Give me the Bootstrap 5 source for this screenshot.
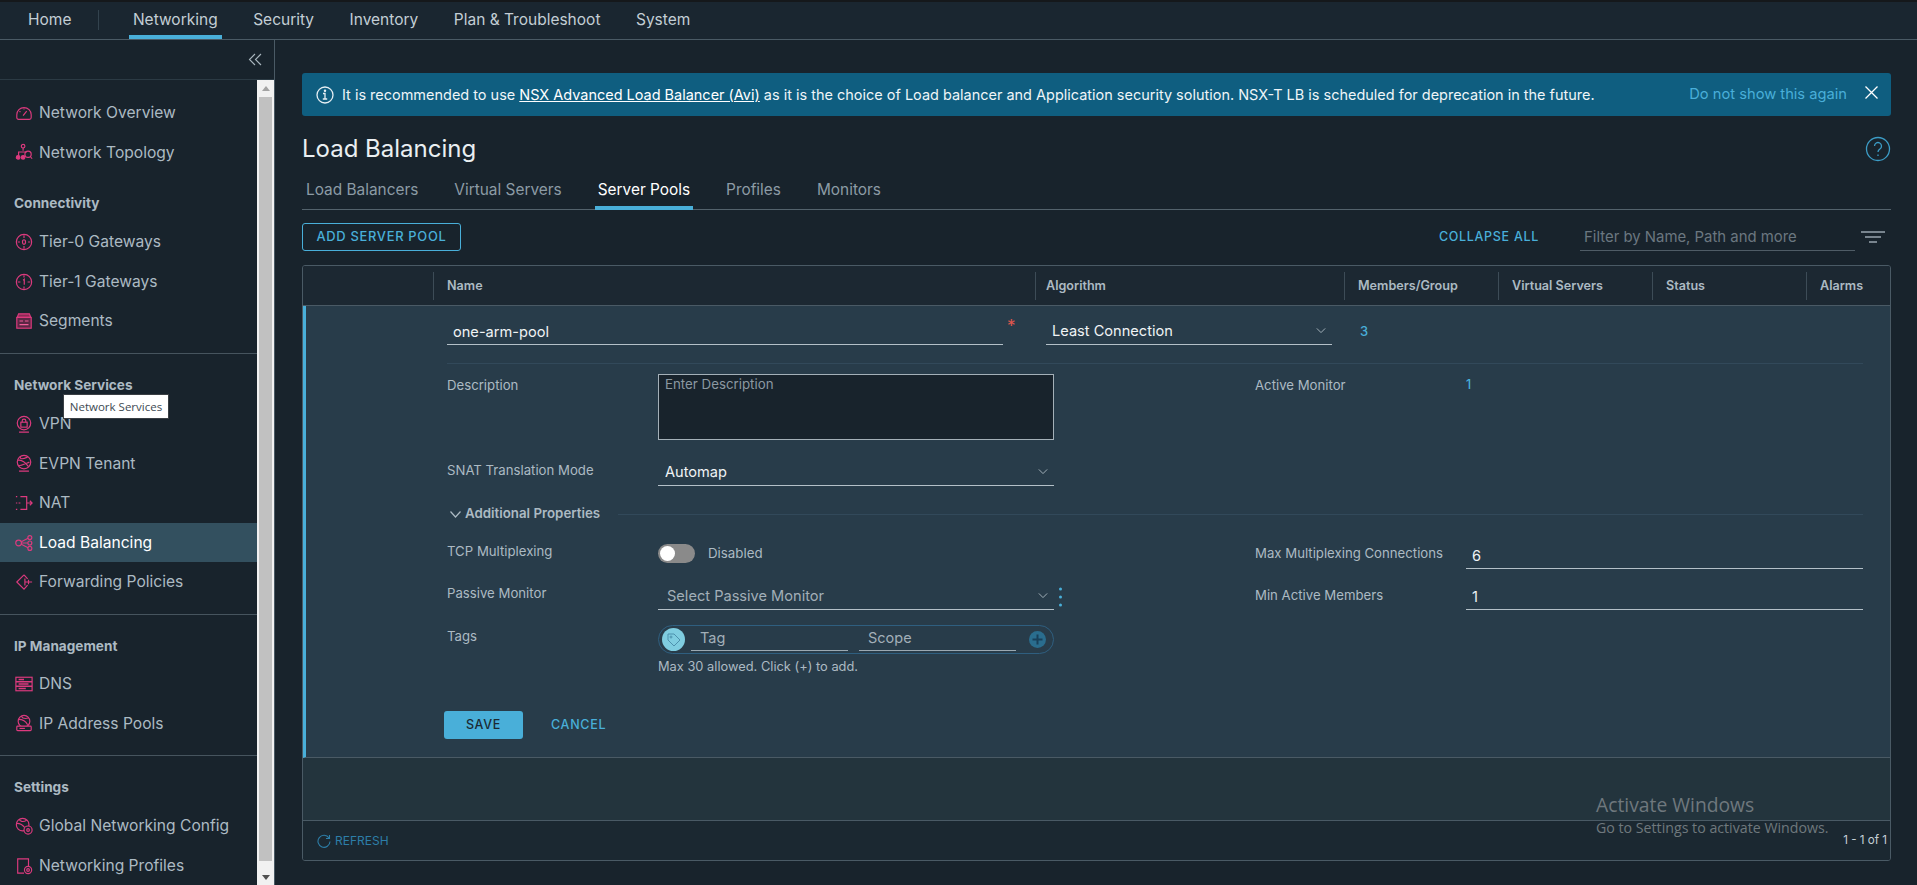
<!DOCTYPE html>
<html lang="en"><head><meta charset="utf-8"><title>Load Balancing</title>
<link href="https://cdn.jsdelivr.net/npm/bootstrap@5.3.0/dist/css/bootstrap.min.css" rel="stylesheet">
<style>
html,body{height:885px;overflow:hidden}
body{background:#18232c;color:#c5d0d6;font-family:Inter,"Noto Sans",sans-serif;font-size:14px}
.topbar{height:40px;background:#1a2630;border-top:2px solid #15181b;border-bottom:1px solid #4a5a65;padding-left:24px}
.toplink{color:#c3ced5;font-size:15.5px;padding:0 4px;height:37px;line-height:36px;margin-right:27.5px;text-decoration:none;border-bottom:4px solid transparent}
.toplink.onn{border-bottom-color:#49afd9}
.topsep{width:1px;height:20px;background:#33434e;margin:0 30px 0 -5px}
.shell{height:845px}
.sidebar{width:275px;background:#18232c;border-right:1px solid #4a5a65}
.collapserow{height:40px;border-bottom:1px solid #2b3a44;padding-right:12px}
.sidescroll{height:805px}
.sidenav{width:257px;height:805px;overflow:hidden;padding-top:13px}
.sgroup{border-top:1px solid #46545e;padding-bottom:12px}
.sgroup.firstg{border-top:0;padding-bottom:0}
.sgroup.nolineg{border-top:0}
.shead{font-weight:700;font-size:13.6px;color:#acbac3;line-height:18px;padding:22px 0 10px 14px}
.sgroup.tightg .shead{padding-bottom:9px}
.sitem{height:39.6px;display:flex;align-items:center;color:#acbac3;font-size:15.6px;padding-left:15px;text-decoration:none}
.sitem svg{width:18px;height:18px;margin-right:6px;flex:none;stroke:#dc3a7e;fill:none;stroke-width:1.3}
.sitem.picked{background:#33505f;color:#fff}
.fakebar{width:17px;background:#f1f1f1;padding:0 2px;position:relative}
.fakethumb{position:absolute;left:2px;right:2px;top:17px;bottom:24px;background:#c1c1c1}
.arrup,.arrdn{position:absolute;left:5px;width:0;height:0;border-left:4px solid transparent;border-right:4px solid transparent}
.arrup{top:6px;border-bottom:5px solid #a3a3a3}
.arrdn{bottom:5px;border-top:5px solid #505050}
.tipbox{position:absolute;left:63px;top:394px;width:106px;height:25px;background:#fff;border:1px solid #3a3f44;color:#3e4a52;font:11.5px/23px "Open Sans",sans-serif;text-align:center;z-index:5}
.mainpane{padding:33px 26px 0 27px;background:#18232c;min-width:0}
.banner{height:43px;background:#0f5e80;border-radius:3px;padding:0 12px 0 14px;color:#eef5f8;font-size:14.48px}
.banner a{color:#fff}
.banner .dontshow{color:#49afd9;text-decoration:none;font-size:14.7px;margin-right:17px}
.pagetitle{font-size:24px;font-weight:400;color:#eaeff2;margin:0;line-height:36px}
.titlerow{margin-top:16px;height:34px}
.tabsrow{margin-top:5px;height:39px;border-bottom:1px solid #53626c;padding-left:1px}
.tablink{color:#8c9ba5;font-size:15.4px;padding:0 3px;margin-right:30px;height:39px;line-height:38px;text-decoration:none;border-bottom:4px solid transparent}
.tablink.onn{color:#fff;border-bottom-color:#49afd9}
.toolrow{margin-top:13px;height:28px}
.outbtn{height:28px;width:159px;padding:0;border:1px solid #49afd9;border-radius:3px;background:transparent;color:#49afd9;font-size:12.9px;letter-spacing:.7px;font-weight:500}
.linkbtn{color:#49afd9;font-size:12.5px;letter-spacing:.7px;font-weight:500;text-decoration:none}
.filterbox{width:275px;height:28px;background:transparent;border:0;border-bottom:1px solid #4f5c66;border-radius:0;color:#fff;font-size:14.9px;padding:2px 4px;margin:0 6px 0 41px}
.filterbox::placeholder{color:#6b7780}
.filterbox:focus{background:transparent;box-shadow:none;color:#fff}
.filtericon{margin-right:6px}
.poolgrid{margin-top:14px;height:596px;border:1px solid #4a5a65;border-radius:3px;overflow:hidden}
.gridhead{height:40px;background:#1c2832;border-bottom:1px solid #4a5a65;font-weight:600;font-size:12.6px;color:#acbac3}
.gh{height:28px;border-left:1px solid #3d4c57;padding-left:13px;line-height:28px;flex:none}
.expanded{height:452px;background:#283c4a;border-left:3px solid #49afd9;border-bottom:1px solid #4a5a65;padding:0 27px 0 141px}
.firstline{height:58px;border-bottom:1px solid #32495a;padding-top:11px}
.lineinput{height:28px;background:transparent;border:0;border-bottom:1px solid #b4c0c8;border-radius:0;color:#f0f3f5;font-size:14.6px;padding:2px 6px 0}
.lineinput:focus{background-color:transparent;box-shadow:none;color:#f0f3f5;border-color:#b4c0c8}
.lineselect{background-color:transparent;background-image:url("data:image/svg+xml,%3Csvg xmlns='http://www.w3.org/2000/svg' viewBox='0 0 12 8'%3E%3Cpath d='M1 1.5l5 5 5-5' fill='none' stroke='%23a2afb8' stroke-width='1.2'/%3E%3C/svg%3E");background-size:10px 7px;background-position:right 6px center;background-repeat:no-repeat}
.reqmark{width:43px;padding-left:4px;color:#e0574d;font-size:17px;line-height:18px}
.formrow{display:grid;grid-template-columns:211px 396px 201px 211px 397px}
.flabel{color:#acbac3;font-size:13.2px;line-height:20px}
.bluelink{color:#49afd9;font-weight:500;font-size:12.4px;line-height:20px}
.descbox{height:66px;background:#18232c;border:1px solid #a4b0b8;border-radius:0;color:#fff;font-size:13.3px;padding:0 6px;resize:none}
.descbox::placeholder{color:#8b98a1}
.descbox:focus{background:#18232c;box-shadow:none;color:#fff;border-color:#a4b0b8}
.addprops{margin-top:18px;height:20px;font-weight:600;font-size:13.3px;color:#acbac3;padding-left:3px}
.addprops i{flex:1;height:1px;background:#32495a;margin-left:18px}
.toggletrack{width:37px;height:19px;border-radius:10px;background:#8a8a8a;position:relative;margin-top:3px}
.toggleknob{position:absolute;left:2px;top:2px;width:15px;height:15px;border-radius:50%;background:#fff}
.togtxt{font-size:13.3px;color:#acbac3;margin-left:13px;margin-top:2px;line-height:20px}
.dotsbox{width:3px;height:20px;position:absolute;right:-8px;top:5px}
.tagpill{height:29px;border:1px solid #2f5f80;border-radius:15px;padding:0 3px;position:relative}
.tagcirc{width:23px;height:23px;border-radius:50%;background:#7fcde0;flex:none;margin-right:6px}
.taginput{width:157px;height:23px;background:transparent;border:0;border-bottom:1px solid #9aa8b2;border-radius:0;padding:0 9px 4px;font-size:14.5px;color:#fff;margin-right:11px}
.taginput::placeholder{color:#a2afb8}
.taginput:focus{background:transparent;box-shadow:none;color:#fff}
.plus{width:17px;height:17px;margin-left:13px;flex:none}
.helptxt{font-size:12.85px;color:#acbac3;line-height:18px;margin-top:4px}
.savebtn{width:79px;height:28px;padding:0;background:#49afd9;border:0;border-radius:3px;color:#1b2a32;font-size:12.5px;letter-spacing:.7px;font-weight:500;margin:0 28px 0 -3px}
.gridempty{height:63px;background:#23343d;border-bottom:1px solid #4a5a65}
.gridfoot{height:39px;background:#1b2831;padding:0 3px 0 14px;font-size:12px}
.refreshlink{color:#2d7ea8;font-size:12px;text-decoration:none}
.pagecount{color:#c5d0d6;font-size:11.6px;margin-left:auto}
.winmark{position:absolute;left:1596px;top:791px;color:#6f787d;font-family:"Open Sans",sans-serif;z-index:6;pointer-events:none}
.winmark b{display:block;font-weight:400;font-size:19.3px;line-height:27px}
.winmark span{font-size:14.2px;line-height:20px;display:block}
</style></head>
<body class="position-relative">
<nav class="topbar d-flex align-items-start">
  <a class="toplink" href="#">Home</a><span class="topsep mt-2"></span>
  <a class="toplink onn" href="#">Networking</a>
  <a class="toplink" href="#">Security</a>
  <a class="toplink" href="#">Inventory</a>
  <a class="toplink" href="#">Plan &amp; Troubleshoot</a>
  <a class="toplink" href="#">System</a>
</nav>
<div class="shell d-flex">
  <aside class="sidebar flex-shrink-0">
    <div class="collapserow d-flex align-items-center justify-content-end">
      <svg width="14" height="13" viewBox="0 0 14 13" fill="none" stroke="#a9b6be" stroke-width="1.1"><path d="M7 1L1.500 6.500 7 12M13 1L7.500 6.500 13 12"/></svg>
    </div>
    <div class="sidescroll d-flex">
      <div class="sidenav">
        <div class="sgroup firstg">
          <a class="sitem" href="#"><svg viewBox="0 0 20 20"><path d="M2 12a8 8 0 0 1 16 0v3a2 2 0 0 1-2 2H4a2 2 0 0 1-2-2z"/><path d="M9 13l4-5M5 8l1 1M10 5v1"/></svg>Network Overview</a>
          <a class="sitem" href="#"><svg viewBox="0 0 20 20"><circle cx="9" cy="3.5" r="2"/><path d="M9 5.500v3M4 14v-4h9"/><circle cx="3.500" cy="16" r="2" fill="#dc3a7e"/><circle cx="9" cy="16" r="2" fill="#dc3a7e"/><circle cx="14.500" cy="12.500" r="3.500"/><path d="M17 15l2 2.500"/></svg>Network Topology</a>
        </div>
        <div class="sgroup nolineg">
          <div class="shead">Connectivity</div>
          <a class="sitem" href="#"><svg viewBox="0 0 20 20"><circle cx="10" cy="10" r="8.500"/><ellipse cx="10" cy="10" rx="1.700" ry="2.500"/><path d="M10 2.500v3M10 14.500v3M3 10h2.500M14.500 10H17"/></svg>Tier-0 Gateways</a>
          <a class="sitem" href="#"><svg viewBox="0 0 20 20"><circle cx="10" cy="10" r="8.500"/><path d="M9 8l1.300-1v6M10 2.500v2.500M10 15v2.500M3 10h3M14 10h3"/></svg>Tier-1 Gateways</a>
          <a class="sitem" href="#"><svg viewBox="0 0 20 20"><path d="M2.500 6L4 2h12l1.500 4z" fill="#8b2a55"/><rect x="2" y="6" width="16" height="12" fill="#5c2745"/><path d="M5 10h4M11 10h4M5 14h10" stroke="#ef5f9a"/></svg>Segments</a>
        </div>
        <div class="sgroup">
          <div class="shead">Network Services</div>
          <a class="sitem" href="#"><svg viewBox="0 0 20 20"><circle cx="10" cy="9" r="7.500"/><rect x="6.500" y="8" width="7" height="5.500"/><path d="M8 8V6.500a2 2 0 0 1 4 0V8M4.500 19h11"/></svg>VPN</a>
          <a class="sitem" href="#"><svg viewBox="0 0 20 20"><circle cx="10" cy="9" r="7.500"/><path d="M3 7c4-1 9 3 12 7M6 2.500C5 6 8 6 14 3.500M4 13c3 0 7-2 12-4M4.500 19h11"/></svg>EVPN Tenant</a>
          <a class="sitem" href="#"><svg viewBox="0 0 20 20"><path d="M6 3h7v14H6M13 10h6M16.500 7.500L19 10l-2.500 2.500M4 10h2M1 3h1.500M1 10h1.500M1 17h1.500"/></svg>NAT</a>
          <a class="sitem picked" href="#"><svg viewBox="0 0 20 20"><circle cx="4" cy="10" r="3.200"/><circle cx="16.500" cy="4" r="2.200"/><circle cx="16.500" cy="10" r="2.200"/><circle cx="16.500" cy="16" r="2.200"/><path d="M7 8.500l7.500-3.700M7.200 10h7M7 11.500l7.500 3.700"/></svg>Load Balancing</a>
          <a class="sitem" href="#"><svg viewBox="0 0 20 20"><path d="M10 2L2 10l8 8 4-4.500M14 6.500L10 2"/><path d="M11 6v8M11 10h8M15 7.500v5"/></svg>Forwarding Policies</a>
        </div>
        <div class="sgroup tightg">
          <div class="shead">IP Management</div>
          <a class="sitem" href="#"><svg viewBox="0 0 20 20"><rect x="1" y="2.500" width="18" height="15"/><path d="M1 7.500h18M1 12.500h18M4 5h6M4 10h11M4 15h8" stroke-width="1.500"/></svg>DNS</a>
          <a class="sitem" href="#"><svg viewBox="0 0 20 20"><circle cx="10" cy="8" r="6.500"/><path d="M4 6c4 0 8 2 10 6M7 2.500c1 2 4 3 8 2"/><rect x="2" y="13.500" width="16" height="5" rx="1" fill="#18232c"/><path d="M5 16h6"/></svg>IP Address Pools</a>
        </div>
        <div class="sgroup">
          <div class="shead">Settings</div>
          <a class="sitem" href="#"><svg viewBox="0 0 20 20"><circle cx="8.500" cy="8.500" r="7"/><path d="M2 7c3 0 7 2 9 5M5 2.500C5 5 9 6 13 3.500"/><circle cx="14.500" cy="14.500" r="4.500" fill="#18232c"/><circle cx="14.500" cy="14.500" r="1.500"/></svg>Global Networking Config</a>
          <a class="sitem" href="#"><svg viewBox="0 0 20 20"><path d="M10 18H3V2h12v8"/><circle cx="14.500" cy="14.500" r="4"/><circle cx="14.500" cy="14.500" r="1.500"/></svg>Networking Profiles</a>
        </div>
      </div>
      <div class="fakebar"><span class="arrup"></span><div class="fakethumb"></div><span class="arrdn"></span></div>
    </div>
  </aside>
  <main class="mainpane flex-grow-1">
    <div class="banner d-flex align-items-center">
      <svg class="flex-shrink-0 me-2" width="18" height="18" viewBox="0 0 18 18" fill="none" stroke="#e6eff3" stroke-width="1.300"><circle cx="9" cy="9" r="8"/><path d="M7 7.500h2v5.500M6.800 13h4.400"/><circle cx="9" cy="4.800" r=".6" fill="#e6eff3"/></svg>
      <span>It is recommended to use <a href="#">NSX Advanced Load Balancer (Avi)</a> as it is the choice of Load balancer and Application security solution. NSX-T LB is scheduled for deprecation in the future.</span>
      <a class="dontshow ms-auto" href="#">Do not show this again</a>
      <svg width="15" height="15" viewBox="0 0 15 15" stroke="#fff" stroke-width="1.300" class="flex-shrink-0 mb-1"><path d="M1.500 1.500l12 12M13.500 1.500l-12 12"/></svg>
    </div>
    <div class="titlerow d-flex align-items-center justify-content-between">
      <h1 class="pagetitle">Load Balancing</h1>
      <svg width="26" height="26" viewBox="0 0 26 26" fill="none" stroke="#3c9dc7" stroke-width="1.300"><circle cx="13" cy="13" r="11.500"/><path d="M9.500 10a3.500 3.500 0 1 1 5.400 3c-1.200.8-1.900 1.500-1.900 3"/><path d="M13 18.500v1.500"/></svg>
    </div>
    <div class="tabsrow d-flex">
      <a class="tablink" href="#">Load Balancers</a>
      <a class="tablink" href="#">Virtual Servers</a>
      <a class="tablink onn" href="#">Server Pools</a>
      <a class="tablink" href="#">Profiles</a>
      <a class="tablink" href="#">Monitors</a>
    </div>
    <div class="toolrow d-flex align-items-center">
      <button class="btn outbtn" type="button">ADD SERVER POOL</button>
      <a class="linkbtn ms-auto" href="#">COLLAPSE ALL</a>
      <input class="form-control filterbox" placeholder="Filter by Name, Path and more">
      <svg class="filtericon" width="24" height="12" viewBox="0 0 24 12" stroke="#98a5ae" stroke-width="1.300"><path d="M0 1h24M4 6h16M8 11h8"/></svg>
    </div>
    <section class="poolgrid">
      <div class="gridhead d-flex align-items-center">
        <div class="flex-shrink-0" style="width:130px"></div>
        <div class="gh" style="width:602px">Name</div>
        <div class="gh" style="width:309px;padding-left:10px">Algorithm</div>
        <div class="gh" style="width:154px">Members/Group</div>
        <div class="gh" style="width:154px">Virtual Servers</div>
        <div class="gh" style="width:154px">Status</div>
        <div class="gh">Alarms</div>
      </div>
      <div class="expanded">
        <div class="firstline d-flex">
          <input class="form-control lineinput flex-shrink-0" style="width:556px" value="one-arm-pool">
          <span class="flex-shrink-0 reqmark">*</span>
          <select class="form-select lineinput lineselect flex-shrink-0" style="width:286px"><option>Least Connection</option></select>
          <span class="bluelink ms-4 ps-1 pt-1" style="font-size:13px">3</span>
        </div>
        <div class="formrow" style="margin-top:10px">
          <div class="flabel" style="padding-top:1px">Description</div>
          <textarea class="form-control descbox" placeholder="Enter Description"></textarea>
          <div></div>
          <div class="flabel" style="padding-top:1px">Active Monitor</div>
          <div class="bluelink" style="padding-top:1px">1</div>
        </div>
        <div class="formrow" style="margin-top:18px">
          <div class="flabel" style="padding-top:2px">SNAT Translation Mode</div>
          <select class="form-select lineinput lineselect" style="padding-left:7px"><option>Automap</option></select>
        </div>
        <div class="addprops d-flex align-items-center">
          <svg class="me-1" width="11" height="7" viewBox="0 0 11 7" fill="none" stroke="#acbac3" stroke-width="1.200"><path d="M.5.5l5 5.500 5-5.500"/></svg>
          <span>Additional Properties</span><i></i>
        </div>
        <div class="formrow" style="margin-top:17px">
          <div class="flabel">TCP Multiplexing</div>
          <div class="d-flex"><div class="toggletrack"><div class="toggleknob"></div></div><div class="togtxt">Disabled</div></div>
          <div></div>
          <div class="flabel" style="padding-top:2px">Max Multiplexing Connections</div>
          <input class="form-control lineinput" value="6">
        </div>
        <div class="formrow" style="margin-top:13px">
          <div class="flabel" style="padding-top:1px">Passive Monitor</div>
          <div class="position-relative">
            <select class="form-select lineinput lineselect w-100" style="color:#a2afb8;padding-left:9px"><option>Select Passive Monitor</option></select>
            <svg class="dotsbox" viewBox="0 0 3 20" fill="#49afd9"><circle cx="1.500" cy="2" r="1.500"/><circle cx="1.500" cy="10" r="1.500"/><circle cx="1.500" cy="18" r="1.500"/></svg>
          </div>
          <div></div>
          <div class="flabel" style="padding-top:3px">Min Active Members</div>
          <input class="form-control lineinput" value="1">
        </div>
        <div class="formrow" style="margin-top:15px">
          <div class="flabel" style="padding-top:1px">Tags</div>
          <div class="tagpill d-flex align-items-center">
            <svg class="tagcirc" viewBox="0 0 23 23" fill="none" stroke="#4d91ad" stroke-width="1"><path d="M6 6h6l6 6-6 6-6-6z"/><circle cx="9" cy="9" r="1"/></svg>
            <input class="form-control taginput" placeholder="Tag">
            <input class="form-control taginput m-0" placeholder="Scope">
            <svg class="plus" viewBox="0 0 17 17" stroke="#18405a" stroke-width="2"><circle cx="8.500" cy="8.500" r="8.500" fill="#2a6d8e" stroke="none"/><path d="M8.500 3.500v10M3.500 8.500h10"/></svg>
          </div>
        </div>
        <div class="formrow"><div></div><div class="helptxt">Max 30 allowed. Click (+) to add.</div></div>
        <div class="d-flex align-items-center" style="margin-top:35px">
          <button class="btn savebtn" type="button">SAVE</button>
          <a class="linkbtn" href="#">CANCEL</a>
        </div>
      </div>
      <div class="gridempty"></div>
      <div class="gridfoot d-flex align-items-center">
        <svg class="me-1" width="14" height="14" viewBox="0 0 14 14" fill="none" stroke="#2d7ea8" stroke-width="1.100"><path d="M12 4A6 6 0 1 0 13 7.500M12.500 1v3.500H9"/></svg>
        <a class="refreshlink" href="#">REFRESH</a>
        <span class="pagecount">1 - 1 of 1</span>
      </div>
    </section>
  </main>
</div>
<div class="tipbox">Network Services</div>
<div class="winmark"><b>Activate Windows</b><span>Go to Settings to activate Windows.</span></div>
</body></html>
